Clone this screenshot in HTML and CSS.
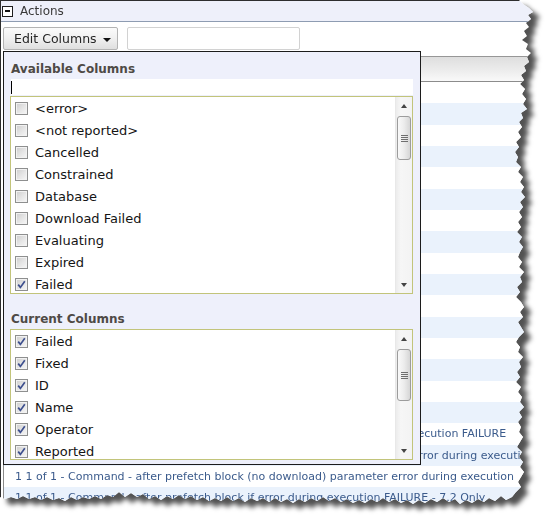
FILE: index.html
```html
<!DOCTYPE html>
<html>
<head>
<meta charset="utf-8">
<link rel="stylesheet" href="styles.css">
</head>
<body>
<div class="frame">
  <div class="sheet">
    <div class="panel-head">
      <span class="toggle"><span class="minus"></span></span>
      <span class="panel-title">Actions</span>
    </div>
    <div class="toolbar">
      <div class="edit-btn">Edit Columns<span class="caret"></span></div>
      <div class="search"></div>
    </div>
    <div class="grid">
      <div class="grid-head"></div>
      <div class="row">1 1 of 1 - Command - simple action</div>
      <div class="row alt">1 1 of 1 - Command - with download</div>
      <div class="row">1 1 of 1 - Command - no download</div>
      <div class="row alt">1 1 of 1 - Command - restart required</div>
      <div class="row">1 1 of 1 - Command - constrained by time</div>
      <div class="row alt">1 1 of 1 - Command - download failure</div>
      <div class="row">1 1 of 1 - Command - expired action</div>
      <div class="row alt">1 1 of 1 - Command - cancelled action</div>
      <div class="row">1 1 of 1 - Command - evaluating relevance</div>
      <div class="row alt">1 1 of 1 - Command - reported fixed</div>
      <div class="row">1 1 of 1 - Command - database error</div>
      <div class="row alt">1 1 of 1 - Command - multiple targets</div>
      <div class="row">1 1 of 1 - Command - after prefetch block</div>
      <div class="row alt">1 1 of 1 - Command - before prefetch block</div>
      <div class="row">1 1 of 1 - Command - parameter error</div>
      <div class="row alt">1 1 of 1 - Command - prefetch block error</div>
      <div class="row">1 1 of 1 - Command - after prefetch block with parameter error during execution FAILURE</div>
      <div class="row alt">1 1 of 1 - Command - after prefetch block (no download) parameter set error during execution FAILURE</div>
      <div class="row">1 1 of 1 - Command - after prefetch block (no download) parameter error during execution</div>
      <div class="row alt">1 1 of 1 - Command - after prefetch block if error during execution FAILURE - 7.2 Only</div>
    </div>

    <div class="popup">
      <div class="pop-title">Available Columns</div>
      <div class="filter"><span class="cursor"></span></div>
      <div class="listbox list-avail">
        <ul class="items">
          <li><span class="cb"></span>&lt;error&gt;</li>
          <li><span class="cb"></span>&lt;not reported&gt;</li>
          <li><span class="cb"></span>Cancelled</li>
          <li><span class="cb"></span>Constrained</li>
          <li><span class="cb"></span>Database</li>
          <li><span class="cb"></span>Download Failed</li>
          <li><span class="cb"></span>Evaluating</li>
          <li><span class="cb"></span>Expired</li>
          <li><span class="cb"><svg viewBox="0 0 11 11"><path d="M2.2 5.6 4.4 8.4 8.8 2.2"/></svg></span>Failed</li>
        </ul>
        <div class="sb">
          <span class="sb-btn"><span class="arr-up"></span></span>
          <span class="thumb thumb-a"><span class="grip"></span></span>
          <span class="sb-fill"></span>
          <span class="sb-btn"><span class="arr-down"></span></span>
        </div>
      </div>
      <div class="pop-title second">Current Columns</div>
      <div class="listbox list-current">
        <ul class="items">
          <li><span class="cb"><svg viewBox="0 0 11 11"><path d="M2.2 5.6 4.4 8.4 8.8 2.2"/></svg></span>Failed</li>
          <li><span class="cb"><svg viewBox="0 0 11 11"><path d="M2.2 5.6 4.4 8.4 8.8 2.2"/></svg></span>Fixed</li>
          <li><span class="cb"><svg viewBox="0 0 11 11"><path d="M2.2 5.6 4.4 8.4 8.8 2.2"/></svg></span>ID</li>
          <li><span class="cb"><svg viewBox="0 0 11 11"><path d="M2.2 5.6 4.4 8.4 8.8 2.2"/></svg></span>Name</li>
          <li><span class="cb"><svg viewBox="0 0 11 11"><path d="M2.2 5.6 4.4 8.4 8.8 2.2"/></svg></span>Operator</li>
          <li><span class="cb"><svg viewBox="0 0 11 11"><path d="M2.2 5.6 4.4 8.4 8.8 2.2"/></svg></span>Reported</li>
        </ul>
        <div class="sb">
          <span class="sb-btn"><span class="arr-up"></span></span>
          <span class="thumb thumb-c"><span class="grip"></span></span>
          <span class="sb-fill"></span>
          <span class="sb-btn"><span class="arr-down"></span></span>
        </div>
      </div>
    </div>
  </div>
</div>
</body>
</html>
```

FILE: styles.css
```css
* { box-sizing: border-box; }

html, body {
  margin: 0;
  padding: 0;
  background: #ffffff;
}

body {
  font-family: "DejaVu Sans", "Liberation Sans", sans-serif;
  color: #222;
}

.frame {
  width: 550px;
  height: 517px;
  filter: drop-shadow(7px 6px 2.5px rgba(0, 0, 0, 0.68));
}

.sheet {
  position: relative;
  width: 540px;
  height: 512px;
  background: #ffffff;
  border-left: 1px solid #2e2e2e;
  border-top: 1px solid #2e2e2e;
  overflow: hidden;
  clip-path: polygon(0px 0px, 519px 0px, 523px 4px, 529px 8px, 533px 12px, 528px 15px, 531px 19px, 526px 23px, 529px 27px, 524px 31px, 527px 36px, 522px 40px, 528px 44px, 526px 49px, 531px 53px, 527px 57px, 529px 62px, 524px 66px, 526px 71px, 521px 75px, 524px 80px, 520px 84px, 525px 89px, 522px 94px, 526px 99px, 523px 104px, 527px 109px, 521px 113px, 523px 118px, 519px 122px, 522px 127px, 518px 132px, 521px 137px, 516px 142px, 519px 147px, 515px 152px, 518px 157px, 516px 162px, 521px 167px, 518px 172px, 523px 177px, 520px 182px, 524px 187px, 521px 192px, 525px 197px, 520px 202px, 523px 207px, 519px 212px, 522px 217px, 518px 222px, 521px 227px, 517px 232px, 522px 237px, 519px 242px, 523px 247px, 520px 252px, 518px 257px, 522px 262px, 519px 267px, 524px 272px, 520px 277px, 522px 282px, 517px 287px, 520px 292px, 516px 297px, 521px 302px, 524px 307px, 520px 312px, 523px 317px, 518px 322px, 521px 327px, 524px 332px, 519px 337px, 516px 342px, 520px 347px, 518px 352px, 523px 357px, 519px 362px, 521px 367px, 517px 372px, 520px 377px, 516px 382px, 521px 387px, 518px 392px, 522px 397px, 520px 402px, 524px 407px, 519px 412px, 522px 417px, 518px 422px, 521px 427px, 519px 432px, 523px 437px, 520px 442px, 517px 447px, 522px 452px, 519px 457px, 523px 462px, 520px 467px, 524px 472px, 521px 477px, 518px 482px, 521px 487px, 516px 492px, 512px 497px, 506px 500px, 501px 496px, 495px 501px, 489px 498px, 484px 502px, 478px 499px, 472px 503px, 466px 500px, 460px 504px, 455px 499px, 449px 502px, 443px 498px, 437px 502px, 431px 499px, 425px 503px, 419px 500px, 413px 504px, 407px 500px, 401px 503px, 395px 499px, 389px 502px, 383px 498px, 377px 502px, 371px 499px, 365px 503px, 359px 500px, 353px 503px, 347px 499px, 341px 502px, 335px 498px, 329px 501px, 323px 497px, 317px 501px, 311px 498px, 305px 502px, 299px 499px, 293px 503px, 287px 499px, 281px 502px, 275px 498px, 269px 502px, 263px 498px, 257px 501px, 251px 498px, 245px 502px, 239px 498px, 233px 501px, 227px 497px, 221px 501px, 215px 498px, 209px 501px, 203px 497px, 197px 500px, 191px 496px, 185px 499px, 179px 495px, 173px 499px, 167px 496px, 161px 500px, 155px 496px, 149px 499px, 143px 494px, 137px 497px, 131px 493px, 125px 497px, 119px 492px, 113px 497px, 107px 495px, 101px 499px, 95px 496px, 89px 499px, 83px 497px, 77px 500px, 71px 497px, 65px 501px, 59px 498px, 53px 500px, 47px 497px, 41px 500px, 35px 497px, 29px 499px, 23px 496px, 17px 499px, 11px 497px, 5px 499px, 0px 497px);
}

/* ---------- panel header ---------- */
.panel-head {
  height: 21px;
  background: #eef0fa;
  border-bottom: 1px solid #8e9cb2;
  display: flex;
  align-items: center;
  padding-left: 1px;
  gap: 7px;
}

.toggle {
  width: 11px;
  height: 11px;
  border: 1px solid #1e1e1e;
  background: #ffffff;
  display: flex;
  align-items: center;
  justify-content: center;
}

.minus {
  width: 5px;
  height: 2px;
  background: #111;
}

.panel-title {
  font-size: 12px;
  color: #3a3a3a;
  line-height: 20px;
}

/* ---------- toolbar ---------- */
.toolbar {
  height: 34px;
  display: flex;
  align-items: flex-start;
  padding: 5px 0 0 2px;
  gap: 9px;
}

.edit-btn {
  width: 115px;
  height: 23px;
  border: 1px solid #b3b3b3;
  border-radius: 2px;
  background: linear-gradient(#fbfbfb, #f1f1f1 45%, #dfdfdf);
  font-size: 12.5px;
  color: #262626;
  display: flex;
  align-items: center;
  padding-left: 10px;
}

.caret {
  width: 0;
  height: 0;
  margin-left: 6px;
  margin-top: 2px;
  border-left: 4px solid transparent;
  border-right: 4px solid transparent;
  border-top: 4px solid #111;
}

.search {
  width: 173px;
  height: 23px;
  border: 1px solid #d2d2d2;
  border-radius: 2px;
  background: #ffffff;
}

/* ---------- grid behind ---------- */
.grid {
  margin-left: 2px;
  border-left: 1px solid #8a8a8a;
}

.grid-head {
  height: 26px;
  border-top: 1px solid #979797;
  border-bottom: 1px solid #8c8c8c;
  background: linear-gradient(#dedede, #ececec 55%, #f9f9f9);
}

.row {
  height: 21.33px;
  line-height: 21.33px;
  padding-left: 11px;
  font-size: 11px;
  color: #3b5b8c;
  white-space: nowrap;
  overflow: hidden;
  background: #ffffff;
}

.row.alt {
  background: #eaf2fc;
}

/* ---------- popup ---------- */
.popup {
  position: absolute;
  left: 2px;
  top: 50px;
  width: 418px;
  height: 414px;
  border: 1px solid #1c1c1c;
  background: #eef0fb;
}

.pop-title {
  height: 27px;
  padding: 9px 0 0 7px;
  font-size: 12px;
  font-weight: bold;
  line-height: 16px;
  color: #4e4a46;
}

.pop-title.second {
  height: 35px;
  padding-top: 17px;
}

.filter {
  margin-left: 7px;
  width: 402px;
  height: 16px;
  background: #ffffff;
  display: flex;
  align-items: center;
}

.cursor {
  width: 1px;
  height: 13px;
  background: #000;
}

.listbox {
  margin: 1px 0 0 6px;
  width: 403px;
  border: 1px solid #c2c47a;
  background: #ffffff;
  display: grid;
  grid-template-columns: 1fr 17px;
  overflow: hidden;
}

.list-avail { height: 198px; }
.list-current { height: 131px; margin-top: 0; }

.items {
  list-style: none;
  margin: 0;
  padding: 0 0 0 4px;
  overflow: hidden;
}

.items li {
  height: 22px;
  display: flex;
  align-items: center;
  gap: 7px;
  font-size: 13px;
  color: #141414;
  white-space: nowrap;
}

.cb {
  width: 13px;
  height: 13px;
  flex: none;
  border: 1px solid #8e8f8f;
  background: linear-gradient(135deg, #cdcdcd, #e6e6e6 55%, #f7f7f7);
  box-shadow: inset 0 0 0 1px #f2f2f2;
  display: flex;
  align-items: center;
  justify-content: center;
}

.cb svg {
  width: 11px;
  height: 11px;
  fill: none;
  stroke: #3d4f8e;
  stroke-width: 1.7;
}

/* ---------- scrollbar ---------- */
.sb {
  display: flex;
  flex-direction: column;
  background: linear-gradient(90deg, #ececec, #f6f6f6 30%, #f3f3f3);
  border-left: 1px solid #e8e8e8;
}

.sb-btn {
  height: 17px;
  flex: none;
  display: flex;
  align-items: center;
  justify-content: center;
}

.arr-up {
  width: 0;
  height: 0;
  border-left: 3.5px solid transparent;
  border-right: 3.5px solid transparent;
  border-bottom: 4px solid #444;
}

.arr-down {
  width: 0;
  height: 0;
  border-left: 3.5px solid transparent;
  border-right: 3.5px solid transparent;
  border-top: 4px solid #444;
}

.thumb {
  flex: none;
  margin: 2px 1px 0 1px;
  border: 1px solid #9c9c9c;
  border-radius: 3px;
  background: linear-gradient(90deg, #f9f9f9, #ececec 50%, #d6d6d6);
  display: flex;
  align-items: center;
  justify-content: center;
}

.thumb-a { height: 44px; }
.thumb-c { height: 52px; }

.grip {
  width: 7px;
  height: 7px;
  background: repeating-linear-gradient(#6e6e6e 0 1px, transparent 1px 2px);
}

.sb-fill { flex: 1; }
```
